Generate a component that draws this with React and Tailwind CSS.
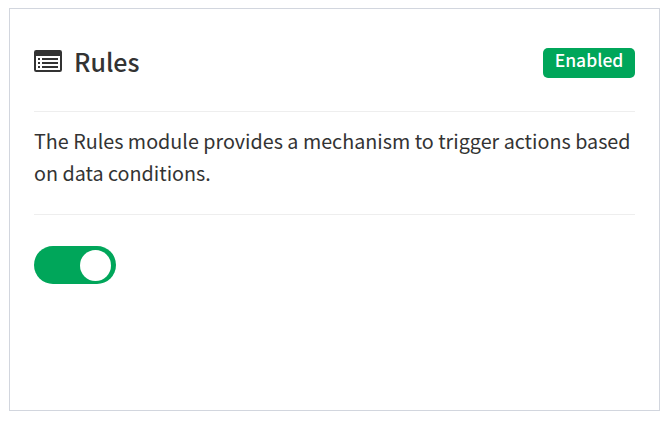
import { useState } from "react";

function RulesIcon({ className = "h-[22px] w-7" }) {
  return (
    <svg viewBox="0 0 28 22" className={className} fill="none" aria-hidden="true">
      <rect x="1" y="1" width="26" height="20" rx="1.2" stroke="currentColor" strokeWidth="2" />
      <path d="M1 1h26v5H1z" fill="currentColor" />
      <path
        d="M4 9h2M8 9h16M4 13h2M8 13h16M4 17h2M8 17h16"
        stroke="currentColor"
        strokeWidth="2"
      />
    </svg>
  );
}

function Toggle({ checked, onChange, label }) {
  return (
    <button
      type="button"
      role="switch"
      aria-checked={checked}
      aria-label={label}
      onClick={() => onChange(!checked)}
      className={`flex h-[38px] w-[82px] items-center rounded-full px-[5px] pt-px transition ${
        checked ? "justify-end bg-[#00a65a]" : "justify-start bg-[#cccccc]"
      }`}
    >
      <span className="h-[31px] w-[31px] rounded-full bg-white" />
    </button>
  );
}

export default function App() {
  const [enabled, setEnabled] = useState(true);

  return (
    <div className="h-[421px] bg-white pl-[9px] pt-2 font-['Noto_Sans_CJK_SC',sans-serif] text-[#333333]">
      <section className="h-[403px] w-[651px] border border-[#d2d6de] px-6">
        <header className="flex h-[102px] items-start justify-between pt-[39px]">
          <h2 className="-mt-0.5 flex items-center gap-3 text-[25px] leading-[30px] font-medium">
            <RulesIcon className="h-[22px] w-7" />
            Rules
          </h2>
          <span className="h-[30px] w-[92px] rounded-[5px] bg-[#00a65a] text-center text-[17.5px] leading-[23px] font-medium text-white">
            {enabled ? "Enabled" : "Disabled"}
          </span>
        </header>

        <p className="h-[104px] border-y border-[#eeeeee] pt-[13px] text-[19.74px] leading-8">
          The Rules module provides a mechanism to trigger actions based on data
          conditions.
        </p>

        <div className="pt-[31px]">
          <Toggle checked={enabled} onChange={setEnabled} label="Rules" />
        </div>
      </section>
    </div>
  );
}
